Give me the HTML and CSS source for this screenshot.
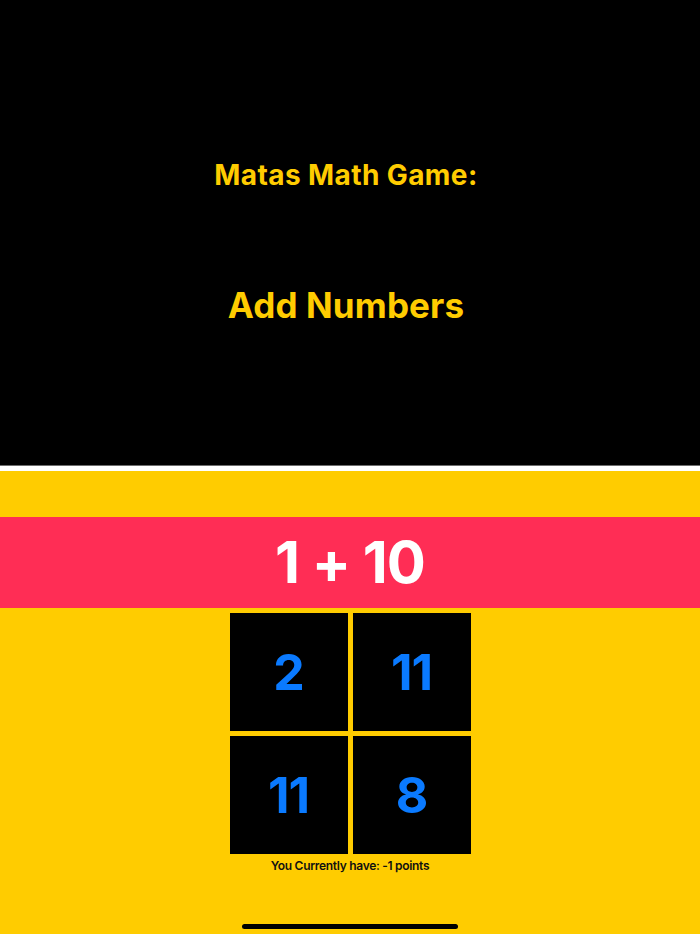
FILE: index.html
```html
<!DOCTYPE html>
<html>
<head>
<meta charset="utf-8">
<link rel="stylesheet" href="styles.css">
</head>
<body>
<div class="screen">
  <header class="hero">
    <h1 class="title">Matas Math Game:</h1>
    <h2 class="subtitle">Add Numbers</h2>
  </header>
  <div class="divider"></div>
  <main class="game">
    <div class="question">1 + 10</div>
    <div class="answers">
      <div class="tile">2</div>
      <div class="tile">11</div>
      <div class="tile">11</div>
      <div class="tile">8</div>
    </div>
    <p class="points">You Currently have: -1 points</p>
    <div class="spacer"></div>
    <div class="home-indicator"></div>
  </main>
</div>
</body>
</html>
```
FILE: styles.css
```css
html, body {
  margin: 0;
  padding: 0;
}
body {
  font-family: Inter, "Noto Sans", sans-serif;
  background: #ffcc00;
}
.screen {
  width: 700px;
  height: 934px;
  display: flex;
  flex-direction: column;
  overflow: hidden;
}
.hero {
  height: 465px;
  background: #000;
  box-sizing: border-box;
  padding-top: 161px;
  padding-right: 8px;
  display: flex;
  flex-direction: column;
  align-items: center;
  color: #ffcc00;
}
.title {
  margin: 0;
  font-size: 28px;
  line-height: 28px;
  font-weight: 700;
  letter-spacing: 0.4px;
}
.subtitle {
  margin: 99px 0 0;
  font-size: 35px;
  line-height: 35px;
  font-weight: 700;
  letter-spacing: 0.15px;
}
.divider {
  height: 5px;
  background: #fff;
  border-top: 1px solid #6d6d6d;
}
.game {
  flex: 1;
  display: flex;
  flex-direction: column;
  align-items: center;
  background: #ffcc00;
  padding-top: 46px;
}
.question {
  align-self: stretch;
  height: 91px;
  line-height: 91px;
  background: #ff2d55;
  color: #fff;
  text-align: center;
  font-size: 58px;
  font-weight: 700;
  letter-spacing: -1px;
}
.answers {
  margin-top: 5px;
  display: grid;
  grid-template-columns: 118px 118px;
  grid-auto-rows: 118px;
  gap: 5px;
}
.tile {
  background: #000;
  color: #0a7aff;
  font-size: 50px;
  font-weight: 700;
  display: flex;
  align-items: center;
  justify-content: center;
  letter-spacing: -1px;
}
.points {
  margin: 4px 0 0;
  font-size: 12px;
  line-height: 16px;
  font-weight: 600;
  letter-spacing: -0.3px;
  color: #111;
}
.spacer {
  flex: 1;
}
.home-indicator {
  width: 216px;
  height: 5px;
  border-radius: 3px;
  background: #000;
  margin-bottom: 5px;
}
```
